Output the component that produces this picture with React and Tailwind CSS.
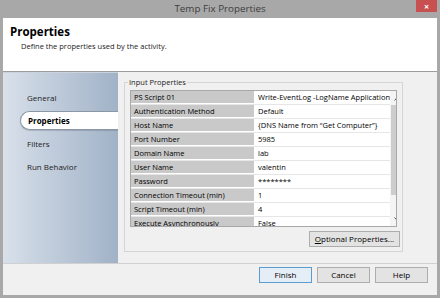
const rows = [
  ["PS Script 01", "Write-EventLog -LogName Application"],
  ["Authentication Method", "Default"],
  ["Host Name", "{DNS Name from \u201cGet Computer\u201d}"],
  ["Port Number", "5985"],
  ["Domain Name", "lab"],
  ["User Name", "valentin"],
  ["Password", "********"],
  ["Connection Timeout (min)", "1"],
  ["Script Timeout (min)", "4"],
  ["Execute Asynchronously", "False"],
];

const nav = ["General", "Properties", "Filters", "Run Behavior"];

function DlgButton({ children, primary }) {
  return (
    <button
      type="button"
      className={[
        "h-[16px] w-[53px] text-[8px] leading-none text-black bg-[#e3e3e3] border",
        primary ? "border-[#5a9bd0] bg-[#e5eef6]" : "border-[#adadad]",
      ].join(" ")}
    >
      {children}
    </button>
  );
}

export default function App() {
  return (
    <div
      className="w-[440px] h-[298px] bg-[#a8a8a8] flex flex-col overflow-hidden text-black"
      style={{ fontFamily: '"Open Sans", "Noto Sans", sans-serif' }}
    >
      <div className="relative h-[18px] shrink-0 flex items-center justify-center">
        <span className="text-[9.8px] text-[#3d3d3d]">Temp Fix Properties</span>
        <div className="absolute right-[3px] top-0 w-[21px] h-[12px] bg-[#c85050] flex items-center justify-center text-white text-[9px] leading-none font-bold">
          ×
        </div>
      </div>

      <div className="mx-[3px] flex-1 flex flex-col min-h-0">
        <div className="h-[54px] shrink-0 bg-white pl-[7px] pt-[6px] border-b border-[#9c9c9c]">
          <div className="text-[11.5px] font-bold leading-[16px]">Properties</div>
          <div className="pl-[11px] mt-[1px] text-[7.5px] leading-[10px] text-[#222]">
            Define the properties used by the activity.
          </div>
        </div>

        <div className="h-[191px] shrink-0 flex bg-[#f0f0f0]">
          <div className="w-[115px] shrink-0 bg-gradient-to-r from-[#d8e0ea] to-[#a1b2c7] pt-[13px] border-t border-[#c9d2dd]">
            {nav.map((n) =>
              n === "Properties" ? (
                <div key={n} className="h-[23px] flex items-center">
                  <div className="ml-[17px] flex-1 h-[19px] bg-white rounded-l-[10px] border border-r-0 border-[#8c97a6] shadow-[0_1px_1px_rgba(0,0,0,0.15)] flex items-center pl-[7px] text-[8px] font-bold">
                    {n}
                  </div>
                </div>
              ) : (
                <div key={n} className="h-[23px] flex items-center pl-[24px] text-[8px] text-[#222]">
                  {n}
                </div>
              )
            )}
          </div>

          <div className="flex-1 pl-[6px] pt-[10px]">
            <div className="relative w-[279px] h-[170px] border border-[#d5d5d5] pl-[5px] pt-[7px]">
              <span className="absolute -top-[6px] left-[3px] bg-[#f0f0f0] px-[1px] text-[7.5px] leading-[11px] text-[#222]">
                Input Properties
              </span>
              <div className="w-[267px] h-[137px] flex border border-[#a8a8a8] bg-white overflow-hidden">
                <div className="flex-1 flex flex-col">
                  {rows.map(([k, v]) => (
                    <div key={k} className="h-[14px] shrink-0 flex border-b border-[#e6e6e6]">
                      <div className="w-[124px] shrink-0 bg-[#c9c9c9] border-r border-b border-white pl-[3px] text-[7.5px] leading-[13px] whitespace-nowrap overflow-hidden">
                        {k}
                      </div>
                      <div className="flex-1 pl-[3px] text-[7.5px] leading-[13px] whitespace-nowrap overflow-hidden">
                        {v}
                      </div>
                    </div>
                  ))}
                </div>
                <div className="w-[14px] shrink-0 flex flex-col bg-[#f4f4f4]">
                  <div className="h-[14px] flex items-center justify-center">
                    <svg width="7" height="5" viewBox="0 0 7 5">
                      <path d="M0.5 4.5 L3.5 1.2 L6.5 4.5" fill="none" stroke="#555" strokeWidth="1" />
                    </svg>
                  </div>
                  <div className="mx-[1px] h-[90px] bg-[#cdcdcd]" />
                  <div className="flex-1" />
                  <div className="h-[14px] flex items-center justify-center">
                    <svg width="7" height="5" viewBox="0 0 7 5">
                      <path d="M0.5 0.5 L3.5 3.8 L6.5 0.5" fill="none" stroke="#555" strokeWidth="1" />
                    </svg>
                  </div>
                </div>
              </div>
              <div className="flex justify-end pr-[2px] mt-[4px]">
                <button
                  type="button"
                  className="h-[16px] w-[91px] bg-[#e3e3e3] border border-[#adadad] text-[8px] leading-none"
                >
                  <span className="underline">O</span>ptional Properties...
                </button>
              </div>
            </div>
          </div>
        </div>

        <div className="flex-1 bg-[#f0f0f0] border-t border-[#d0d0d0] flex justify-end items-start pt-[3px] pr-[9px] gap-[5px]">
          <DlgButton primary>Finish</DlgButton>
          <DlgButton>Cancel</DlgButton>
          <DlgButton>Help</DlgButton>
        </div>
      </div>
      <div className="h-[3px] shrink-0" />
    </div>
  );
}
